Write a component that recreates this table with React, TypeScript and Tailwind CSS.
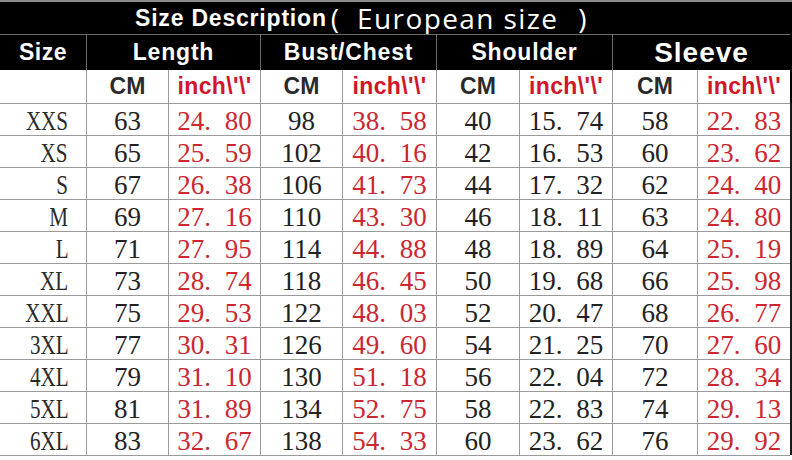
const rows: string[][] = [
  ["XXS", "63", "24.80", "98", "38.58", "40", "15.74", "58", "22.83"],
  ["XS", "65", "25.59", "102", "40.16", "42", "16.53", "60", "23.62"],
  ["S", "67", "26.38", "106", "41.73", "44", "17.32", "62", "24.40"],
  ["M", "69", "27.16", "110", "43.30", "46", "18.11", "63", "24.80"],
  ["L", "71", "27.95", "114", "44.88", "48", "18.89", "64", "25.19"],
  ["XL", "73", "28.74", "118", "46.45", "50", "19.68", "66", "25.98"],
  ["XXL", "75", "29.53", "122", "48.03", "52", "20.47", "68", "26.77"],
  ["3XL", "77", "30.31", "126", "49.60", "54", "21.25", "70", "27.60"],
  ["4XL", "79", "31.10", "130", "51.18", "56", "22.04", "72", "28.34"],
  ["5XL", "81", "31.89", "134", "52.75", "58", "22.83", "74", "29.13"],
  ["6XL", "83", "32.67", "138", "54.33", "60", "23.62", "76", "29.92"],
];

// columns holding inches in red
const redCols = [2, 4, 8];

const fmt = (v: string) => (v.includes(".") ? v.replace(".", ". ") : v);

const App = () => {
  return (
    <div className="w-[792px] h-[460px] bg-white overflow-hidden">
      <div className="w-[792px] border-t-2 border-[#8a8a8a]">
        <div className="grid grid-cols-[86px_82px_92px_82px_94px_83px_93px_85px_93px_2px]">
          {/* Title row */}
          <div className="col-span-9 h-[32px] bg-black text-white flex items-center pl-[135px]">
            <span className="font-['Liberation_Sans',Arial,sans-serif] font-bold text-[23px] tracking-[0.8px] leading-none">
              Size Description
            </span>
            <span className="ml-[4px] font-['Open_Sans','Noto_Sans',sans-serif] text-[28px] leading-none">
              (
            </span>
            <span className="ml-[18px] font-['Open_Sans','Noto_Sans',sans-serif] text-[28px] leading-none tracking-[1.4px]">
              European size
            </span>
            <span className="ml-[20px] font-['Open_Sans','Noto_Sans',sans-serif] text-[28px] leading-none">
              )
            </span>
          </div>
          <div className="row-span-3 bg-black" />

          {/* Header row */}
          <div className="h-[36px] bg-black border-t border-[#6b6b6b] flex items-center justify-center text-white font-['Liberation_Sans',Arial,sans-serif] font-bold text-[23px] tracking-[0.5px]">
            Size
          </div>
          {["Length", "Bust/Chest", "Shoulder"].map((h) => (
            <div
              key={h}
              className="col-span-2 h-[36px] bg-black border-t border-l border-[#6b6b6b] flex items-center justify-center text-white font-['Liberation_Sans',Arial,sans-serif] font-bold text-[23px] tracking-[0.8px]"
            >
              {h}
            </div>
          ))}
          <div className="col-span-2 h-[36px] bg-black border-t border-l border-[#6b6b6b] flex items-center justify-center text-white font-['Liberation_Sans',Arial,sans-serif] font-bold text-[28px] tracking-[1px]">
            Sleeve
          </div>

          {/* Unit row */}
          <div className="h-[33px] bg-white" />
          {[0, 1, 2, 3].map((i) => (
            <div key={i} className="contents">
              <div className="h-[33px] border-l border-[#9a9a9a] flex items-center justify-center font-['Liberation_Sans',Arial,sans-serif] font-bold text-[23px] text-[#2a2a2a]">
                CM
              </div>
              <div className="h-[33px] border-l border-[#9a9a9a] flex items-center justify-center font-['Liberation_Sans',Arial,sans-serif] font-bold text-[23px] tracking-[0.4px] text-[#d3142a]">
                {"inch\\'\\'"}
              </div>
            </div>
          ))}

          {/* Data rows */}
          {rows.map((r) => (
            <div key={r[0]} className="contents">
              {r.map((v, i) => (
                <div
                  key={i}
                  className={
                    i === 0
                      ? "h-[32px] border-t border-[#9a9a9a] flex items-center justify-end pr-[18px] pt-[3px] font-['Liberation_Serif',serif] text-[27px] leading-none text-[#2a2a2a]"
                      : "h-[32px] border-t border-l border-[#9a9a9a] flex items-center justify-center pt-[3px] font-['Liberation_Serif',serif] text-[27px] leading-none [word-spacing:7px] " +
                        (redCols.includes(i) ? "text-[#cc2630]" : "text-[#222222]")
                  }
                >
                  {i === 0 ? (
                    <span className="inline-block scale-x-[0.78] origin-right">{v}</span>
                  ) : (
                    fmt(v)
                  )}
                </div>
              ))}
              <div className="h-[32px] bg-[#1a1a1a]" />
            </div>
          ))}

          {/* bottom line */}
          <div className="col-span-9 border-t border-[#9a9a9a]" />
        </div>
      </div>
    </div>
  );
};

export default App;
